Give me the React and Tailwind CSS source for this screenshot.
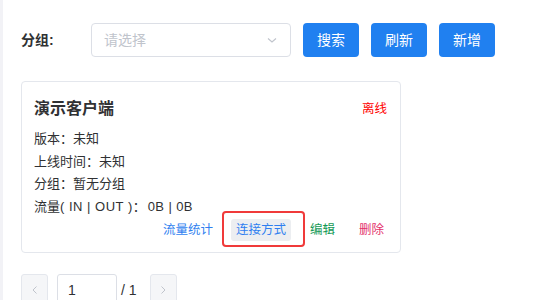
import React from "react";

export default function App() {
  const font = { fontFamily: '"Liberation Sans", "Noto Sans CJK SC", sans-serif' };
  return (
    <div className="w-[537px] h-[300px] overflow-hidden bg-white flex" style={font}>
      <div className="w-[3px] bg-[#f2f2f6] shrink-0" />
      <div className="flex-1 flex flex-col pl-[18px]">
        <div className="flex items-center mt-[23px] h-[34px] shrink-0">
          <div className="w-[70px] text-[14px] font-bold text-[#303133]">分组:</div>
          <div className="w-[200px] h-[34px] border border-[#dcdfe6] rounded-[4px] flex items-center justify-between pl-[12px] pr-[12px]">
            <span className="text-[14px] text-[#c0c4cc]">请选择</span>
            <svg width="12" height="12" viewBox="0 0 12 12" fill="none">
              <path d="M2 4.5 L6 8 L10 4.5" stroke="#c0c4cc" strokeWidth="1.1" />
            </svg>
          </div>
          <div className="flex gap-[12px] ml-[12px]">
            {["搜索", "刷新", "新增"].map((t) => (
              <button key={t} className="w-[56px] h-[34px] rounded-[4px] bg-[#2080f0] text-white text-[14px]">
                {t}
              </button>
            ))}
          </div>
        </div>
        <div className="mt-[24px] w-[380px] h-[172px] shrink-0 border border-[#e4e7ed] rounded-[4px] px-[12px] pt-[15px] relative">
          <div className="flex justify-between items-center">
            <span className="text-[16px] font-bold text-[#303133]">演示客户端</span>
            <span className="text-[12.5px] text-[#ff0000] mr-[1px]">离线</span>
          </div>
          <div className="mt-[7px] flex flex-col text-[13px] text-[#303133] leading-[22.5px]">
            <div>版本：未知</div>
            <div>上线时间：未知</div>
            <div>分组：暂无分组</div>
            <div>
              流量<span className="tracking-[0.5px]">( IN | OUT )</span>：<span className="tracking-[0.4px] ml-[2px]">0B | 0B</span>
            </div>
          </div>
          <div className="flex justify-end items-center mt-[1px] text-[12.5px] mr-[4px]">
            <span className="text-[#2f7ff0] mr-[18px]">流量统计</span>
            <span className="text-[#2f7ff0] bg-[#eceef1] rounded-[3px] px-[5px] h-[22px] leading-[22px] mr-[19px] relative">
              连接方式
              <span className="absolute left-[-9px] top-[-8px] w-[83px] h-[36px] border-[2.5px] border-[#f03a3a] rounded-[4px]" />
            </span>
            <span className="text-[#159a56] mr-[24px]">编辑</span>
            <span className="text-[#e3306a]">删除</span>
          </div>
        </div>
        <div className="mt-[21px] flex items-center shrink-0">
          <div className="w-[27px] h-[32px] border border-[#e4e7ed] rounded-[3px] bg-[#f5f6f8] flex items-center justify-center">
            <svg width="10" height="10" viewBox="0 0 10 10"><path d="M6.5 1.5 L3 5 L6.5 8.5" stroke="#c0c4cc" fill="none" /></svg>
          </div>
          <div className="ml-[9px] w-[60px] h-[32px] border border-[#dcdfe6] rounded-[3px] flex items-center pl-[10px] text-[14px] text-[#303133]">1</div>
          <span className="ml-[4px] text-[14px] text-[#303133]">/ 1</span>
          <div className="ml-[13px] w-[27px] h-[32px] border border-[#e4e7ed] rounded-[3px] bg-[#f5f6f8] flex items-center justify-center">
            <svg width="10" height="10" viewBox="0 0 10 10"><path d="M3.5 1.5 L7 5 L3.5 8.5" stroke="#c0c4cc" fill="none" /></svg>
          </div>
        </div>
      </div>
    </div>
  );
}
